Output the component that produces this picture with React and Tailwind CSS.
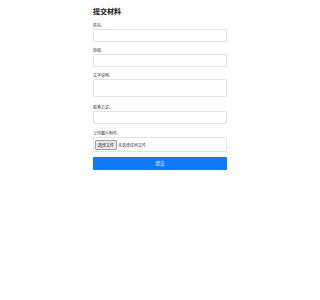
import React from 'react';

const Field = ({ label, children, className = '' }) => (
  <div className={className}>
    <label className="block text-[4px] leading-[6px] text-[#333] mb-[1px]">{label}</label>
    {children}
  </div>
);

export default function App() {
  return (
    <div className="min-h-[300px] bg-white font-['Noto_Sans_CJK_SC',sans-serif]">
      <div className="w-[134px] mx-auto pt-[5px]">
        <h2 className="text-[7px] leading-[12px] font-bold text-[#111] mb-[5px]">提交材料</h2>
        <form className="flex flex-col" onSubmit={(e) => e.preventDefault()}>
          <Field label="姓名:" className="mb-[5px]">
            <input className="block w-full h-[13px] border border-[#e3e3e3] rounded-[1px] outline-none" />
          </Field>
          <Field label="班级:" className="mb-[5px]">
            <input className="block w-full h-[13px] border border-[#e3e3e3] rounded-[1px] outline-none" />
          </Field>
          <Field label="文字说明:" className="mb-[7px]">
            <textarea className="block w-full h-[18px] border border-[#e3e3e3] rounded-[1px] outline-none resize-none" />
          </Field>
          <Field label="联系方式:" className="mb-[6px]">
            <input className="block w-full h-[13px] border border-[#e3e3e3] rounded-[1px] outline-none" />
          </Field>
          <Field label="上传图片附件:">
            <div className="flex items-center h-[15px] border border-[#e3e3e3] rounded-[1px] px-[1px] gap-[1px]">
              <span className="text-[4px] leading-[8px] px-[2px] bg-[#e9e9e9] border border-[#a0a0a0] rounded-[1px] text-[#222]">选择文件</span>
              <span className="text-[4px] text-[#333]">未选择任何文件</span>
            </div>
          </Field>
          <button className="mt-[5px] h-[13px] w-full bg-[#0a7bff] text-white text-[4.5px] rounded-[1px]">提交</button>
        </form>
      </div>
    </div>
  );
}
